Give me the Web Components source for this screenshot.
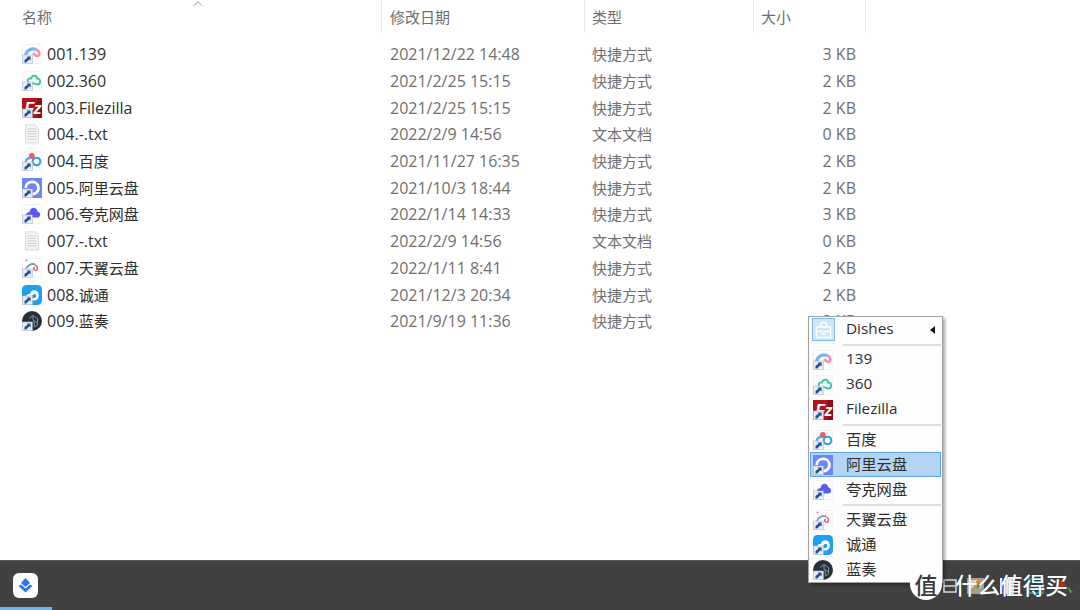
<!DOCTYPE html>
<html lang="zh">
<head>
<meta charset="utf-8">
<title>Dishes</title>
<style>
    html, body { margin: 0; height: 100%; background: #fff; }
    body {
        display: flex;
        flex-direction: column;
        height: 610px;
        overflow: hidden;
        font-family: "Open Sans", "Noto Sans CJK SC", sans-serif;
    }
</style>
</head>
<body>
    <file-list>
        <file-row icon="139" name="001.139" date="2021/12/22 14:48" type="快捷方式" size="3 KB"></file-row>
        <file-row icon="360" name="002.360" date="2021/2/25 15:15" type="快捷方式" size="2 KB"></file-row>
        <file-row icon="fz" name="003.Filezilla" date="2021/2/25 15:15" type="快捷方式" size="2 KB"></file-row>
        <file-row icon="txt" name="004.-.txt" date="2022/2/9 14:56" type="文本文档" size="0 KB"></file-row>
        <file-row icon="baidu" name="004.百度" date="2021/11/27 16:35" type="快捷方式" size="2 KB"></file-row>
        <file-row icon="ali" name="005.阿里云盘" date="2021/10/3 18:44" type="快捷方式" size="2 KB"></file-row>
        <file-row icon="quark" name="006.夸克网盘" date="2022/1/14 14:33" type="快捷方式" size="3 KB"></file-row>
        <file-row icon="txt" name="007.-.txt" date="2022/2/9 14:56" type="文本文档" size="0 KB"></file-row>
        <file-row icon="tianyi" name="007.天翼云盘" date="2022/1/11 8:41" type="快捷方式" size="2 KB"></file-row>
        <file-row icon="cheng" name="008.诚通" date="2021/12/3 20:34" type="快捷方式" size="2 KB"></file-row>
        <file-row icon="lanzou" name="009.蓝奏" date="2021/9/19 11:36" type="快捷方式" size="2 KB"></file-row>
    </file-list>

    <dish-menu>
        <menu-item icon="dishes" arrow>Dishes</menu-item>
        <menu-sep></menu-sep>
        <menu-item icon="139">139</menu-item>
        <menu-item icon="360">360</menu-item>
        <menu-item icon="fz">Filezilla</menu-item>
        <menu-sep></menu-sep>
        <menu-item icon="baidu">百度</menu-item>
        <menu-item icon="ali" active>阿里云盘</menu-item>
        <menu-item icon="quark">夸克网盘</menu-item>
        <menu-sep></menu-sep>
        <menu-item icon="tianyi">天翼云盘</menu-item>
        <menu-item icon="cheng">诚通</menu-item>
        <menu-item icon="lanzou">蓝奏</menu-item>
    </dish-menu>

    <task-bar></task-bar>
    <site-mark></site-mark>

<script>
    const badge = `<g><rect x=".3" y="11" width="10" height="8.800" fill="#e9ecf1" stroke="#b4bac4" stroke-width=".6"/><path d="M2.500 18.500 L2.500 16 L5.800 13.500 L4.400 12.500 L8.600 12.500 L8.600 16.500 L7.300 15.200 L4.300 18.500Z" fill="#1f4f9e"/></g>`;
    const paper = `<rect x=".5" y=".5" width="19" height="19" rx="1" fill="#fff" stroke="#f3f3f6"/>`;

    const ICONS = {
        '139': `${paper}<path d="M3.500 11.500 C4.500 6.500 9.500 3.500 14 5.500" fill="none" stroke="#6fb7ee" stroke-width="3.300"/><path d="M13.500 5.500 C18 6.500 18.500 11.500 15.500 12 C13.500 12 12.500 10.500 11 9" fill="none" stroke="#ee93b8" stroke-width="2.600"/>${badge}`,
        '360': `${paper}<path d="M7 12 C4 9 7 7 9 7.500 C10 3.500 15 4 15 7.500 C19.500 7.500 19 13.500 15 13.500 C13 13.500 12 11 10 12.500 L8 14" fill="none" stroke="#3cc79d" stroke-width="1.900"/>${badge}`,
        'fz': `<rect width="20" height="20" fill="#b5121b"/><rect x="15" width="5" height="20" fill="#8f0c12"/><text x="10.500" y="15.500" text-anchor="middle" font-family="Liberation Sans, sans-serif" font-size="16" font-weight="700" font-style="italic" letter-spacing="-1" fill="#fff">Fz</text>${badge}`,
        'txt': `<path d="M3.500 .8 H13 L16.500 4.200 V19 H3.500Z" fill="#f4f4f4" stroke="#d3d3d3" stroke-width=".8"/><path d="M5.500 5 H14.500 M5.500 7.500 H14.500 M5.500 10 H14.500 M5.500 12.500 H14.500 M5.500 15 H14.500" stroke="#cfcfcf" stroke-width="1"/>`,
        'baidu': `${paper}<circle cx="14.500" cy="10.500" r="3.800" fill="none" stroke="#2f9fe8" stroke-width="2.100"/><circle cx="9.800" cy="5" r="2.900" fill="#ee5a68"/><path d="M3.500 12 C3.500 8.500 6 6.500 8.500 7.500" fill="none" stroke="#55a8ea" stroke-width="2.400"/>${badge}`,
        'ali': `<rect width="20" height="20" fill="#6f83fb"/><path d="M3.800 10 C3.500 2.500 15 1.800 16.300 8.500 C17.200 14 12 17.500 7.500 15.800" fill="none" stroke="#fff" stroke-width="2.800"/>${badge}`,
        'quark': `${paper}<path d="M3.500 12 C3.500 9 6.500 8 7.500 8 C8.500 2 15 3 15.500 7.500 C19 8 19 13.500 15.500 13.500 H8Z" fill="#5a5cf0"/>${badge}`,
        'tianyi': `${paper}<path d="M4 11 C6 6 11 5 14 7.500 C17 10 15 13.500 12.500 12 C11 11 11.500 9.500 13 9.500" fill="none" stroke="#e0577a" stroke-width="1.400"/><path d="M3 13 C5 7 10 5 13 6" fill="none" stroke="#58a9ea" stroke-width="1.500"/><circle cx="4.500" cy="2.500" r="1" fill="#ea7f96"/>${badge}`,
        'cheng': `<rect width="20" height="20" rx="4.500" fill="#1f9ff0"/><path d="M4 14 C2.500 10.500 6 8.500 8 9 C8.500 4.500 15.500 4 16.500 8.500 C18 12 15 15.500 12.500 15.500 H6Z" fill="#fff"/><path d="M10 12.500 C9.500 9 13.500 8 14.200 10.500 C14.500 12 13.500 13 12.500 13 H10Z" fill="#1f9ff0"/>${badge}`,
        'lanzou': `<circle cx="10" cy="10" r="10" fill="#27313c"/><path d="M7 7.500 L11 4.500 L15.500 7.500 L15.500 14 L12.500 16 M11 4.500 L11 9 L15.500 12 M12 9.500 L12.500 16" fill="none" stroke="#8f99a3" stroke-width=".9"/>${badge}`,
        'dishes': `<rect x=".5" y=".5" width="22" height="22" fill="#cfe5fa" stroke="#7db8ee"/><path d="M4.500 9 H18.500 V19.500 H4.500Z M8 9 C8 2.500 15 2.500 15 9 M4.500 13.500 H18.500 M9 16 H14" fill="none" stroke="#fff" stroke-width="1.500"/>`
    };

    // Latin runs take 16px in the list, Chinese runs stay at 15px
    const sized = s => s.replace(/[\u4e00-\u9fff]+/g, m => `<span class="cjk">${m}</span>`);

    class AppIcon extends HTMLElement {
        connectedCallback() {
            const name = this.getAttribute('name');
            const view = name === 'dishes' ? '0 0 23 23' : '0 0 20 20';
            this.attachShadow({ mode: 'open' }).innerHTML = `
                <style>
                    :host { display: block; width: var(--icon-size, 20px); height: var(--icon-size, 20px); flex: none; }
                    svg { display: block; width: 100%; height: 100%; }
                </style>
                <svg viewBox="${view}">${ICONS[name]}</svg>
            `;
        }
    }

    class FileList extends HTMLElement {
        constructor() {
            super();
            this.attachShadow({ mode: 'open' }).innerHTML = `
                <style>
                    :host { display: block; flex: 1; min-height: 0; position: relative; font-size: 15px; }
                    .head { display: grid; grid-template-columns: 382px 203px 169px 112px; height: 33px; color: #6e6e6e; }
                    .head div { padding: 4px 0 0 7px; line-height: 26px; border-right: 1px solid #e8e8e8; box-sizing: border-box; }
                    .head div:first-child { padding-left: 22px; }
                    .head div:nth-child(2) { padding-left: 8px; }
                    .rows { padding-top: 8px; }
                    .sort { position: absolute; left: 193px; top: 1px; }
                </style>
                <div class="head"><div>名称</div><div>修改日期</div><div>类型</div><div>大小</div></div>
                <svg class="sort" width="10" height="6" viewBox="0 0 10 6"><path d="M.5 5 L5 .8 L9.500 5" fill="none" stroke="#9a9a9a"/></svg>
                <div class="rows"><slot></slot></div>
            `;
        }
    }

    class FileRow extends HTMLElement {
        connectedCallback() {
            const attr = n => this.getAttribute(n) || '';
            this.attachShadow({ mode: 'open' }).innerHTML = `
                <style>
                    :host { display: grid; grid-template-columns: 382px 203px 169px 102px; height: 26.7px; align-items: center; color: #6f6f6f; font-size: 16px; line-height: 20px; }
                    .name { display: flex; align-items: center; gap: 5px; padding-left: 22px; color: #2f2f2f; }
                    .cell { padding-left: 8px; }
                    .type { padding-left: 7px; font-size: 15px; }
                    .size { text-align: right; }
                    .cjk { font-size: 15px; }
                </style>
                <div class="name"><app-icon name="${attr('icon')}"></app-icon><span class="t">${sized(attr('name'))}</span></div>
                <div class="cell">${attr('date')}</div>
                <div class="cell type">${attr('type')}</div>
                <div class="size">${attr('size')}</div>
            `;
        }
    }

    class DishMenu extends HTMLElement {
        constructor() {
            super();
            this.attachShadow({ mode: 'open' }).innerHTML = `
                <style>
                    :host {
                        position: absolute; left: 808px; top: 316px; width: 133px;
                        background: #fdfdfd; border: 1px solid #a3a3a3;
                        box-shadow: 2px 2px 3px rgba(0, 0, 0, .35);
                        font-size: 15.300px; color: #2f2f2f; z-index: 2;
                    }
                </style>
                <slot></slot>
            `;
        }
    }

    class MenuItem extends HTMLElement {
        connectedCallback() {
            const size = this.getAttribute('icon') === 'dishes' ? '23px' : '20px';
            this.attachShadow({ mode: 'open' }).innerHTML = `
                <style>
                    :host { display: flex; align-items: center; height: 25px; box-sizing: border-box; position: relative; padding-left: 2px; }
                    :host([active]) { background: #b3d5f3; box-shadow: inset 0 0 0 1px #5aa6e8; margin: 0 1px; padding-left: 1px; }
                    .ic { width: 24px; display: flex; justify-content: center; --icon-size: ${size}; }
                    .label { margin-left: 11px; flex: 1; position: relative; top: -1.500px; }
                    .arrow { width: 0; height: 0; border: 4px solid transparent; border-right: 5px solid #111; border-left: 0; margin-right: 7px; }
                </style>
                <div class="ic"><app-icon name="${this.getAttribute('icon')}"></app-icon></div>
                <span class="label"><slot></slot></span>
                ${this.hasAttribute('arrow') ? '<span class="arrow"></span>' : ''}
            `;
        }
    }

    class MenuSep extends HTMLElement {
        constructor() {
            super();
            this.attachShadow({ mode: 'open' }).innerHTML = `
                <style>
                    :host { display: block; height: 5px; padding: 2px 1px 0 34px; box-sizing: border-box; }
                    div { height: 2px; background: #dedede; }
                </style>
                <div></div>
            `;
        }
    }

    class TaskBar extends HTMLElement {
        constructor() {
            super();
            this.attachShadow({ mode: 'open' }).innerHTML = `
                <style>
                    :host { display: flex; align-items: center; height: 50px; flex: none; background: #414141; border-top: 1px solid #5a5a5a; box-sizing: border-box; position: relative; padding-left: 13px; }
                    .app { width: 25px; height: 25px; background: #fff; border-radius: 6px; display: flex; align-items: center; justify-content: center; }
                    .line { position: absolute; left: 0; bottom: 0; width: 52px; height: 3px; background: #6db4f0; }
                    .tray { margin-left: auto; margin-right: 7px; display: flex; align-items: center; gap: 14px; }
                    .tray svg { display: block; }
                    .tray svg:first-child { margin-right: -4px; }
                    .tray svg:nth-child(2) { margin-right: 2px; }
                </style>
                <div class="app">
                    <svg width="17" height="17" viewBox="0 0 17 17">
                        <path d="M8.500 1 L13 6 L8.500 10 L4 6Z" fill="#2d74f5"/>
                        <path d="M1.500 9 L4 7.500 L8.500 11.500 L13 7.500 L15.500 9 L8.500 15.500Z" fill="#2d74f5"/>
                    </svg>
                </div>
                <div class="line"></div>
                <div class="tray">
                    <svg width="14" height="16" viewBox="0 0 14 16"><rect x="1" y="2" width="12" height="12" fill="none" stroke="#d8d8d8" stroke-width="1.500"/><path d="M1 8 H13" stroke="#d8d8d8" stroke-width="1.500"/></svg>
                    <svg width="17" height="16" viewBox="0 0 17 16"><rect width="17" height="16" fill="#a79d8c"/><rect x="3" y="2" width="11" height="8" fill="#ddd5c6"/><path d="M6 10 L10 2 H14 L11 10Z" fill="#e8822c"/><path d="M9 10 L12 4 L14 6 L12 10Z" fill="#3fa456"/></svg>
                    <svg width="14" height="16" viewBox="0 0 14 16"><rect width="14" height="16" fill="#e9edf8"/><rect x="2" width="4" height="16" fill="#5668e6"/></svg>
                    <svg width="16" height="16" viewBox="0 0 16 16"><rect x="1" y="1" width="14" height="14" fill="#1a4a57" stroke="#2d9db3" stroke-width="1.500"/></svg>
                    <svg width="15" height="15" viewBox="0 0 15 15"><path d="M0 0 L8 7 L3 12Z" fill="#b92a22"/><path d="M9 8 L15 14 L12 15Z" fill="#3aa655"/></svg>
                </div>
            `;
        }
    }

    class SiteMark extends HTMLElement {
        constructor() {
            super();
            this.attachShadow({ mode: 'open' }).innerHTML = `
                <style>
                    :host { position: absolute; left: 910px; top: 567px; display: flex; align-items: center; gap: 4px; z-index: 3; font-family: "Noto Sans CJK SC", sans-serif; color: #fff; }
                    .seal { width: 32px; height: 32px; border-radius: 50%; background: #fff; color: #3a3a3a; font-size: 23px; line-height: 32px; text-align: center; font-weight: 500; }
                    .words { font-size: 22.600px; line-height: 32px; margin: 2px 0 0 9px; font-weight: 500; text-shadow: 0 0 1px rgba(0, 0, 0, .5); }
                </style>
                <div class="seal">值</div>
                <div class="words">什么值得买</div>
            `;
        }
    }

    customElements.define('app-icon', AppIcon);
    customElements.define('file-list', FileList);
    customElements.define('file-row', FileRow);
    customElements.define('dish-menu', DishMenu);
    customElements.define('menu-item', MenuItem);
    customElements.define('menu-sep', MenuSep);
    customElements.define('task-bar', TaskBar);
    customElements.define('site-mark', SiteMark);
</script>
</body>
</html>
